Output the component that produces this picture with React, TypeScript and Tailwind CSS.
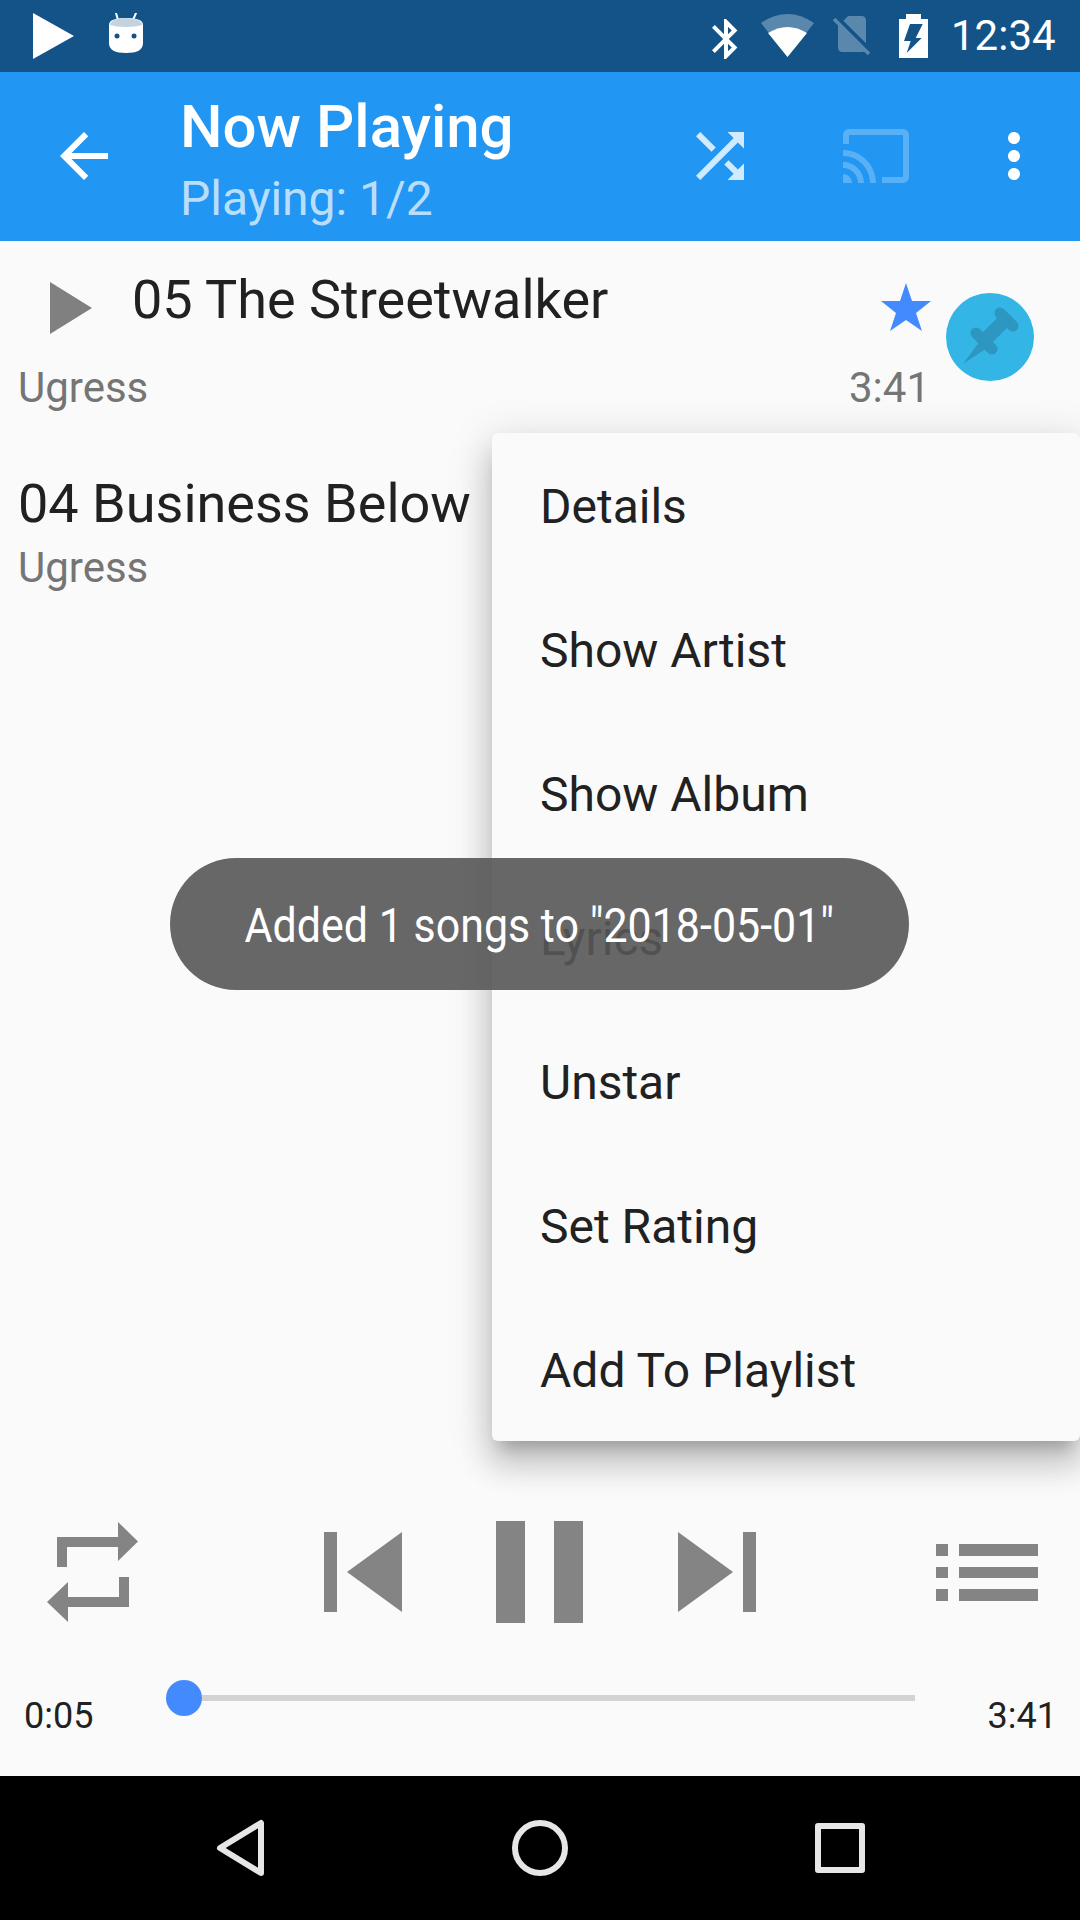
const menuItems = ['Details', 'Show Artist', 'Show Album', 'Lyrics', 'Unstar', 'Set Rating', 'Add To Playlist']

function StatusBar() {
  return (
    <div className="flex h-[72px] shrink-0 items-start bg-[#145388]">
      <svg className="ml-[33px] mt-[13px]" width="41" height="46" viewBox="0 0 41 46" fill="#fff">
        <path d="M0 0L41 23L0 46Z" />
      </svg>
      <svg className="ml-[35px] mt-[13px]" width="34" height="40" viewBox="0 0 34 40">
        <path d="M7 0L9 7M27 0L24 7" stroke="#fff" strokeWidth="2" strokeLinecap="round" />
        <path d="M0 12C0 7 6 5 17 5S34 7 34 12V30C34 37 28 40 17 40S0 37 0 30Z" fill="#fff" />
        <path d="M1 12C1 8 7 5 17 5S33 8 33 12C29 13 24 14 17 14S5 13 1 12Z" fill="#c4d3e0" />
        <circle cx="8" cy="23" r="2.5" fill="#145388" />
        <circle cx="25" cy="23" r="2.5" fill="#145388" />
      </svg>
      <svg className="ml-[559px] mt-[15px]" width="48" height="48" viewBox="0 0 24 24" fill="#fff">
        <path d="M17.71 7.71L12 2h-1v7.59L6.41 5 5 6.41 10.59 12 5 17.59 6.41 19 11 14.41V22h1l5.71-5.71-4.3-4.29 4.3-4.29zM13 5.83l1.88 1.88L13 9.59V5.83zm1.88 10.46L13 18.17v-3.76l1.88 1.88z" />
      </svg>
      <svg className="ml-[11px] mt-[14px]" width="53" height="43" viewBox="0 0 53 43" fill="#fff">
        <path d="M0 9Q26.5 -9 53 9L26.5 43Z" fillOpacity="0.3" />
        <path d="M7 19Q26.5 7 46 19L26.5 43Z" />
      </svg>
      <svg className="ml-[14px] mt-[10px]" width="48" height="48" viewBox="0 0 24 24" fill="#fff" fillOpacity="0.3">
        <path d="M18.99 5c0-1.1-.89-2-1.99-2h-7L7.66 5.34 19 16.68 18.99 5zM3.65 3.88L2.38 5.15 5 7.77V19c0 1.1.9 2 2 2h10.01c.35 0 .67-.1.96-.26l1.88 1.88 1.27-1.27L3.65 3.88z" />
      </svg>
      <svg className="ml-[23px] mt-[14px]" width="29" height="44" viewBox="0 0 29 44" fill="#fff" fillRule="evenodd">
        <path d="M7 0H22V5H29V44H0V5H7ZM11 10L5 27H11.7L7.7 39L22.7 24H16.7L23.7 10Z" />
      </svg>
      <span className="ml-[23px] mt-[11px] text-[42px] leading-[50px] text-white">12:34</span>
    </div>
  )
}

function Toolbar() {
  return (
    <div className="flex h-[169px] shrink-0 items-start bg-[#2196f3]">
      <svg className="ml-[48px] mt-[48px]" width="72" height="72" viewBox="0 0 24 24" fill="#fff">
        <path d="M20 11H7.83l5.59-5.59L12 4l-8 8 8 8 1.41-1.41L7.83 13H20v-2z" />
      </svg>
      <div className="ml-[60px] flex-1">
        <div className="mt-[19px] text-[60px] font-medium leading-[72px] text-white">Now Playing</div>
        <div className="mt-[8px] text-[48px] leading-[56px] text-white/70">Playing: 1/2</div>
      </div>
      <svg className="mt-[48px]" width="72" height="72" viewBox="0 0 24 24" fill="#fff" fillOpacity="0.8">
        <path d="M10.59 9.17L5.41 4 4 5.41l5.17 5.17 1.42-1.41zM14.5 4l2.04 2.04L4 18.59 5.41 20 17.96 7.46 20 9.5V4h-5.5zm.33 9.41l-1.41 1.41 3.13 3.13L14.5 20H20v-5.5l-2.04 2.04-3.13-3.13z" />
      </svg>
      <svg className="ml-[84px] mt-[48px]" width="72" height="72" viewBox="0 0 24 24" fill="#fff" fillOpacity="0.25">
        <path d="M21 3H3c-1.1 0-2 .9-2 2v3h2V5h18v14h-7v2h7c1.1 0 2-.9 2-2V5c0-1.1-.9-2-2-2zM1 18v3h3c0-1.66-1.34-3-3-3zm0-4v2c2.76 0 5 2.24 5 5h2c0-3.87-3.13-7-7-7zm0-4v2c4.97 0 9 4.03 9 9h2c0-6.08-4.93-11-11-11z" />
      </svg>
      <svg className="ml-[66px] mr-[30px] mt-[48px]" width="72" height="72" viewBox="0 0 24 24" fill="#fff">
        <path d="M12 8c1.1 0 2-.9 2-2s-.9-2-2-2-2 .9-2 2 .9 2 2 2zm0 2c-1.1 0-2 .9-2 2s.9 2 2 2 2-.9 2-2-.9-2-2-2zm0 6c-1.1 0-2 .9-2 2s.9 2 2 2 2-.9 2-2-.9-2-2-2z" />
      </svg>
    </div>
  )
}

function TrackList() {
  return (
    <div className="flex-1 pt-[27px]">
      {/* Current track */}
      <div className="flex items-start">
        <div className="w-[932px]">
          <div className="flex items-start">
            <svg className="ml-[50px] mt-[14px]" width="42" height="52" viewBox="0 0 42 52" fill="#808080">
              <path d="M0 0L42 26L0 52Z" />
            </svg>
            <div className="ml-[40px] flex-1 text-[54px] leading-[64px] text-[#212121]">05 The Streetwalker</div>
            <svg className="mt-[15px]" width="50" height="48" viewBox="0 0 50 48" fill="#448aff">
              <path d="M25 0L31 18H50L35 30L41 48L25 37L9 48L15 30L0 18H19Z" />
            </svg>
            <div className="w-px" />
          </div>
          <div className="mt-[30px] flex justify-between pl-[18px] pr-[2px] text-[42px] leading-[48px] text-[#757575]">
            <span>Ugress</span>
            <span>3:41</span>
          </div>
        </div>
        <div className="ml-[14px] mt-[25px] flex h-[88px] w-[88px] items-center justify-center rounded-full bg-[#33b5e5]">
          <svg width="88" height="88" viewBox="0 0 88 88" fill="none" stroke="#2d96c1">
            <path d="M54 20L67 33" strokeWidth="11" strokeLinecap="round" />
            <path d="M60 26L38 48" strokeWidth="14" />
            <path d="M30 40L46 56" strokeWidth="11" strokeLinecap="round" />
            <path d="M17 71L34 48L41 55Z" fill="#2d96c1" stroke="none" />
          </svg>
        </div>
      </div>

      {/* Next track */}
      <div className="mt-[60px] pl-[18px]">
        <div className="text-[54px] leading-[64px] text-[#212121]">04 Business Below</div>
        <div className="mt-[8px] text-[42px] leading-[48px] text-[#757575]">Ugress</div>
      </div>
    </div>
  )
}

function Controls() {
  return (
    <div className="shrink-0 pb-[38px]">
      <div className="flex h-[102px] items-center">
        <svg className="ml-[47px]" width="91" height="100" viewBox="0 0 91 100" fill="#848484">
          <path d="M10 15H71V0L91 19.500L71 39V25H20V45H10Z" />
          <path d="M72 55H82V85H21V100L0 80L21 60V75H72Z" />
        </svg>
        <svg className="ml-[186px]" width="78" height="80" viewBox="0 0 78 80" fill="#848484">
          <path d="M0 0H13V80H0ZM78 0V80L23 40Z" />
        </svg>
        <div className="ml-[94px] flex h-[102px] w-[87px] justify-between">
          <div className="w-[29px] bg-[#848484]" />
          <div className="w-[29px] bg-[#848484]" />
        </div>
        <svg className="ml-[95px]" width="78" height="80" viewBox="0 0 78 80" fill="#848484">
          <path d="M0 0L55 40L0 80ZM65 0H78V80H65Z" />
        </svg>
        <svg className="ml-[180px]" width="102" height="57" viewBox="0 0 102 57" fill="#848484">
          <path d="M0 0H12V12H0ZM23 0H102V12H23ZM0 23H12V34H0ZM23 23H102V34H23ZM0 45H12V57H0ZM23 45H102V57H23Z" />
        </svg>
      </div>
      <div className="mt-[57px] flex items-start">
        <div className="w-[166px] pl-[24px] pt-[14px] text-[36px] leading-[44px] text-[#212121]">0:05</div>
        <div className="flex h-[36px] flex-1 items-center">
          <div className="h-[36px] w-[36px] shrink-0 rounded-full bg-[#448aff]" />
          <div className="h-[6px] flex-1 bg-[#d3d3d3]" />
        </div>
        <div className="w-[165px] pr-[23px] pt-[14px] text-right text-[36px] leading-[44px] text-[#212121]">3:41</div>
      </div>
    </div>
  )
}

function NavBar() {
  return (
    <div className="flex h-[144px] shrink-0 items-start bg-black">
      <svg className="ml-[214px] mt-[41px]" width="54" height="62" viewBox="0 0 54 62" fill="none" stroke="#e6e6e6" strokeWidth="6" strokeLinejoin="round">
        <path d="M47 6V56L6 31Z" />
      </svg>
      <div className="ml-[244px] mt-[44px] h-[56px] w-[56px] rounded-full border-[6px] border-[#e6e6e6]" />
      <div className="ml-[247px] mt-[47px] h-[50px] w-[50px] rounded-[3px] border-[6px] border-[#e6e6e6]" />
    </div>
  )
}

export default function App() {
  return (
    <div className="relative flex h-[1920px] w-[1080px] flex-col overflow-hidden bg-[#fafafa] font-['Roboto',sans-serif]">
      <StatusBar />
      <Toolbar />
      <TrackList />
      <Controls />
      <NavBar />

      {/* Overflow menu */}
      <div className="absolute left-[492px] top-[433px] w-[588px] rounded-[6px] bg-[#fafafa] shadow-[0_24px_30px_3px_rgba(0,0,0,0.14),0_9px_42px_6px_rgba(0,0,0,0.12),0_15px_15px_-9px_rgba(0,0,0,0.2)]">
        {menuItems.map((item) => (
          <div key={item} className="flex h-[144px] items-center pl-[48px] pt-[4px] text-[48px] text-[#212121]">
            {item}
          </div>
        ))}
      </div>

      {/* Toast */}
      <div className="absolute left-[170px] top-[858px] flex h-[132px] w-[739px] items-center justify-center rounded-full bg-[#575757]/90 pt-[3px] text-white">
        <span className="inline-block scale-x-[0.895] whitespace-nowrap text-[48px]">Added 1 songs to "2018-05-01"</span>
      </div>
    </div>
  )
}
